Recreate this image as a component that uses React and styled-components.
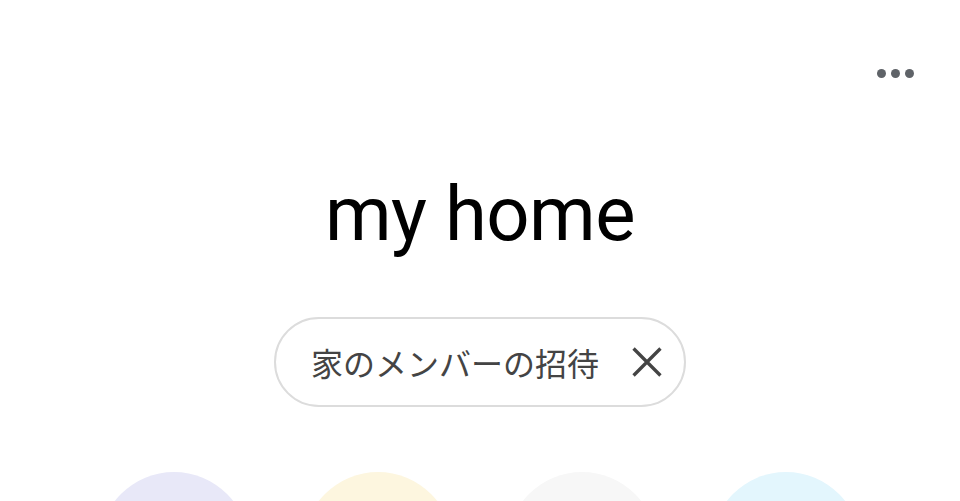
import React from 'react'
import styled, { createGlobalStyle } from 'styled-components'

const GlobalStyle = createGlobalStyle`
  html, body {
    margin: 0;
    padding: 0;
    background: #fff;
  }
  body {
    font-family: Roboto, "Noto Sans CJK JP", sans-serif;
  }
`

const Page = styled.div`
  width: 960px;
  height: 501px;
  overflow: hidden;
  display: flex;
  flex-direction: column;
  align-items: center;

  & > * {
    flex-shrink: 0;
  }
`

const TopBar = styled.div`
  align-self: stretch;
  display: flex;
  justify-content: flex-end;
  padding: 69px 46px 0 0;
`

const MoreButton = styled.button`
  display: flex;
  gap: 5px;
  background: none;
  border: none;
  padding: 0;
  cursor: pointer;
`

const Dot = styled.span`
  width: 9px;
  height: 9px;
  border-radius: 50%;
  background: #5f6368;
`

const Title = styled.h1`
  margin: 98px 0 0;
  font-family: Roboto, sans-serif;
  font-weight: 400;
  font-size: 76px;
  line-height: 1;
  color: #000;
  letter-spacing: -0.5px;
`

const Chip = styled.div`
  margin-top: 65px;
  width: 412px;
  height: 90px;
  box-sizing: border-box;
  border: 2px solid #dcdcdc;
  border-radius: 45px;
  display: flex;
  align-items: center;
  padding: 0 18px 0 35px;
`

const ChipLabel = styled.span`
  flex: 1;
  font-family: "Noto Sans CJK JP", sans-serif;
  font-size: 32px;
  color: #444;
`

const CloseIcon = styled.svg`
  width: 38px;
  height: 38px;
`

const Circles = styled.div`
  margin-top: 65px;
  display: flex;
  gap: 54px;
`

const Circle = styled.div`
  width: 150px;
  height: 150px;
  border-radius: 50%;
  background: ${p => p.$color};
`

export default function App() {
  return (
    <>
      <GlobalStyle />
      <Page>
        <TopBar>
          <MoreButton aria-label="more">
            <Dot />
            <Dot />
            <Dot />
          </MoreButton>
        </TopBar>
        <Title>my home</Title>
        <Chip>
          <ChipLabel>家のメンバーの招待</ChipLabel>
          <CloseIcon viewBox="0 0 24 24">
            <path d="M3.5 3.5 L20.5 20.5 M20.5 3.5 L3.5 20.5" stroke="#444" strokeWidth="2.1" fill="none" />
          </CloseIcon>
        </Chip>
        <Circles>
          <Circle $color="#e8e8f8" />
          <Circle $color="#fdf6df" />
          <Circle $color="#f7f7f7" />
          <Circle $color="#e3f6fd" />
        </Circles>
      </Page>
    </>
  )
}
